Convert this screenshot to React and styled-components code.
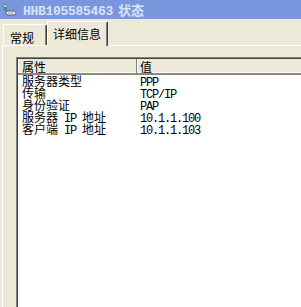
import styled, { createGlobalStyle } from "styled-components";

const GlobalStyle = createGlobalStyle`
  html, body {
    margin: 0;
    padding: 0;
    background: #ece9d8;
    overflow: hidden;
  }
`;

const Window = styled.div`
  width: 301px;
  height: 307px;
  overflow: hidden;
  display: flex;
  flex-direction: column;
  background: #ece9d8;
`;

const TitleBar = styled.div`
  height: 19px;
  flex: none;
  display: flex;
  align-items: center;
  gap: 6px;
  padding-left: 2px;
  background: #7a96df;
  color: #d8e4f8;
  font-weight: bold;
`;

const TitleLatin = styled.span`
  font-family: "Liberation Mono", monospace;
  font-size: 13px;
  letter-spacing: -0.3px;
`;

const TitleCjk = styled.span`
  font-family: "Noto Sans CJK SC", sans-serif;
  font-size: 13px;
  margin-left: 5px;
`;

const Body = styled.div`
  flex: 1;
  display: flex;
  flex-direction: column;
  padding-top: 2px;
`;

const TabStrip = styled.div`
  height: 24px;
  flex: none;
  display: flex;
  align-items: flex-end;
  padding-left: 3px;
`;

const Tab = styled.div`
  position: relative;
  box-sizing: border-box;
  height: ${(p) => (p.$active ? "25px" : "21px")};
  width: ${(p) => (p.$active ? "61px" : "44px")};
  margin-bottom: ${(p) => (p.$active ? "-1px" : "0")};
  z-index: ${(p) => (p.$active ? 1 : 0)};
  padding: ${(p) => (p.$active ? "6px 0 0 5px" : "7px 0 0 6px")};
  background: #ece9d8;
  border-top: 1px solid #fff;
  border-left: 1px solid #fff;
  border-right: 1px solid #404040;
  box-shadow: inset -1px 0 0 #808080;
  border-radius: 2px 2px 0 0;
  font-family: "Noto Sans CJK SC", sans-serif;
  font-size: 12px;
  line-height: 12px;
  color: #000;
`;

const Panel = styled.div`
  flex: 1;
  margin-left: 2px;
  border-top: 1px solid #fff;
  border-left: 1px solid #fff;
  padding: 11px 0 0 13px;
  display: flex;
`;

const ListBox = styled.div`
  flex: none;
  width: 340px;
  height: 300px;
  background: #fff;
  border-top: 1px solid #808080;
  border-left: 1px solid #808080;
  box-shadow: inset 1px 1px 0 #404040;
  padding: 1px 0 0 1px;
  display: flex;
  flex-direction: column;
`;

const Row = styled.div`
  display: grid;
  grid-template-columns: 119px 180px 1fr;
  height: ${(p) => (p.$header ? "15px" : "12px")};
  background: ${(p) => (p.$header ? "#ece9d8" : "transparent")};
  margin-bottom: ${(p) => (p.$header ? "1px" : "0")};
`;

const Cell = styled.div`
  box-sizing: border-box;
  padding-left: ${(p) => (p.$first ? "4px" : "3px")};
  padding-top: ${(p) => (p.$header ? "2px" : "0")};
  height: 100%;
  white-space: nowrap;
  font-family: "Noto Sans CJK SC", sans-serif;
  font-size: 12px;
  line-height: 12px;
  color: #000;
  ${(p) =>
    p.$header &&
    `
    border-bottom: 2px solid #8c8a7e;
    border-right: 1px solid #808080;
    box-shadow: inset 0 -1px 0 #fff, inset 1px 0 0 #fff;
  `}
`;

const Latin = styled.span`
  font-family: "Liberation Mono", monospace;
  font-size: 12px;
  letter-spacing: -1.2px;
`;

function Mixed({ text }) {
  const parts = text.split(/([\x00-\x7f]+)/).filter(Boolean);
  return parts.map((part, i) =>
    /^[\x00-\x7f]+$/.test(part) ? (
      <Latin key={i}>{part.replace(/ /g, "\u00a0")}</Latin>
    ) : (
      <span key={i}>{part}</span>
    )
  );
}

function AppIcon() {
  return (
    <svg width="15" height="15" viewBox="0 0 15 15">
      <rect x="2" y="2" width="3" height="7" rx="1" fill="#3e8f86" />
      <rect x="2.5" y="3" width="2" height="2" fill="#b8e6d8" />
      <rect x="4" y="9" width="10" height="4" rx="2" fill="#eef0f6" stroke="#5c6478" strokeWidth="1" />
      <path d="M6 11 H12" stroke="#9aa2b6" strokeWidth="1" />
    </svg>
  );
}

const rows = [
  ["服务器类型", "PPP"],
  ["传输", "TCP/IP"],
  ["身份验证", "PAP"],
  ["服务器 IP 地址", "10.1.1.100"],
  ["客户端 IP 地址", "10.1.1.103"],
];

export default function App() {
  return (
    <>
      <GlobalStyle />
      <Window>
        <TitleBar>
          <AppIcon />
          <span>
            <TitleLatin>HHB105585463</TitleLatin>
            <TitleCjk>状态</TitleCjk>
          </span>
        </TitleBar>
        <Body>
          <TabStrip>
            <Tab>常规</Tab>
            <Tab $active>详细信息</Tab>
          </TabStrip>
          <Panel>
            <ListBox>
              <Row $header>
                <Cell $header $first>属性</Cell>
                <Cell $header>值</Cell>
                <Cell $header />
              </Row>
              {rows.map(([name, value]) => (
                <Row key={name}>
                  <Cell $first>
                    <Mixed text={name} />
                  </Cell>
                  <Cell>
                    <Mixed text={value} />
                  </Cell>
                  <Cell />
                </Row>
              ))}
            </ListBox>
          </Panel>
        </Body>
      </Window>
    </>
  );
}
